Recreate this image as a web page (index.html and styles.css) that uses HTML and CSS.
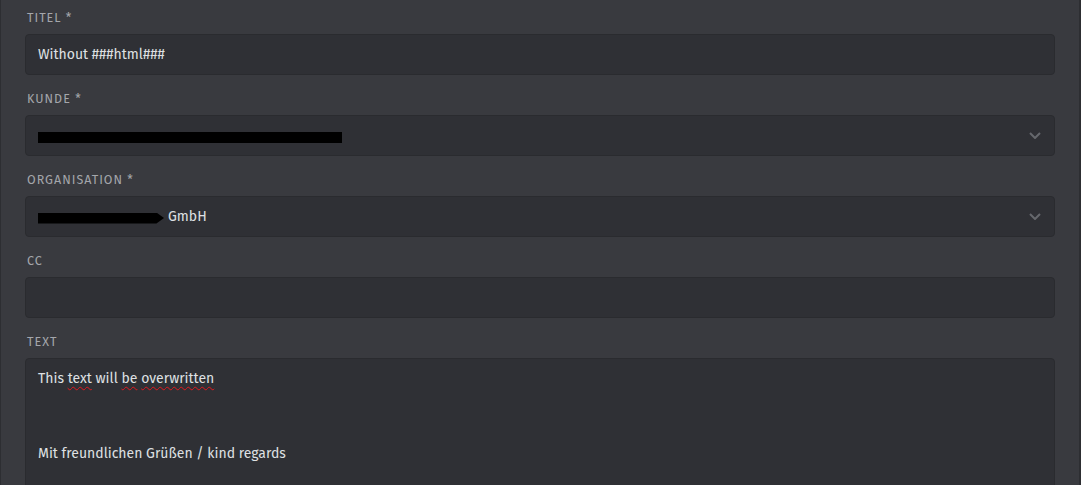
FILE: index.html
```html
<!DOCTYPE html>
<html lang="de">
<head>
    <meta charset="UTF-8">
    <title>Ticket</title>
    <link rel="stylesheet" href="styles.css">
</head>
<body>
<div class="panel">
    <form class="ticket-form">
        <div class="field">
            <label class="field-label">Titel *</label>
            <div class="input">Without ###html###</div>
        </div>
        <div class="field">
            <label class="field-label">Kunde *</label>
            <div class="input select">
                <span class="redacted redacted-customer"></span>
                <svg class="chevron" width="12" height="7" viewBox="0 0 12 7"><path d="M1 1 L6 6 L11 1" fill="none" stroke="#66686d" stroke-width="2"/></svg>
            </div>
        </div>
        <div class="field">
            <label class="field-label">Organisation *</label>
            <div class="input select">
                <span class="redacted redacted-org"></span><span class="org-suffix">GmbH</span>
                <svg class="chevron" width="12" height="7" viewBox="0 0 12 7"><path d="M1 1 L6 6 L11 1" fill="none" stroke="#66686d" stroke-width="2"/></svg>
            </div>
        </div>
        <div class="field">
            <label class="field-label">CC</label>
            <div class="input"></div>
        </div>
        <div class="field">
            <label class="field-label">Text</label>
            <div class="textarea">
                <div class="line">This <span class="typo">text</span> will <span class="typo">be</span> <span class="typo">overwritten</span></div>
                <div class="line"></div>
                <div class="line"></div>
                <div class="line">Mit freundlichen Grüßen / kind regards</div>
            </div>
        </div>
    </form>
</div>
</body>
</html>
```

FILE: styles.css
```css
* {
    box-sizing: border-box;
    margin: 0;
    padding: 0;
}

html, body {
    height: 100%;
    overflow: hidden;
}

body {
    background-color: #393a3f;
    font-family: "Fira Sans", Lato, "Open Sans", sans-serif;
    color: #dfe0e3;
}

/* Panel with darker edges */
.panel {
    height: 100%;
    border-left: 1px solid #2d2e32;
    border-right: 2px solid #2d2e32;
    padding: 9px 24px 0 24px;
}

.field {
    margin-bottom: 15px;
}

.field-label {
    display: block;
    font-size: 12.5px;
    line-height: 18px;
    letter-spacing: 1px;
    text-transform: uppercase;
    color: #a4a6ab;
    margin-bottom: 7px;
    padding-left: 2px;
}

.input {
    position: relative;
    display: flex;
    align-items: center;
    height: 41px;
    padding: 0 12px;
    background-color: #2f3035;
    border: 1px solid #2a2b2f;
    border-radius: 4px;
    font-size: 14px;
}

.select {
    padding-right: 40px;
}

.chevron {
    position: absolute;
    right: 13px;
    top: 16px;
}

/* Redaction bars */
.redacted {
    display: inline-block;
    height: 11px;
    background-color: #000;
}

.redacted-customer {
    width: 304px;
    margin-top: 3px;
}

.redacted-org {
    width: 126px;
    margin-top: 3px;
    clip-path: polygon(0 0, 94% 0, 100% 50%, 94% 100%, 0 100%);
}

.org-suffix {
    margin-left: 4px;
}

.textarea {
    height: 170px;
    padding: 7px 12px;
    background-color: #2f3035;
    border: 1px solid #2a2b2f;
    border-radius: 4px;
    font-size: 14px;
    line-height: 25px;
}

.line {
    height: 25px;
}

.typo {
    text-decoration: underline wavy #e0191e;
    text-decoration-thickness: 1px;
    text-underline-offset: 3px;
}
```
